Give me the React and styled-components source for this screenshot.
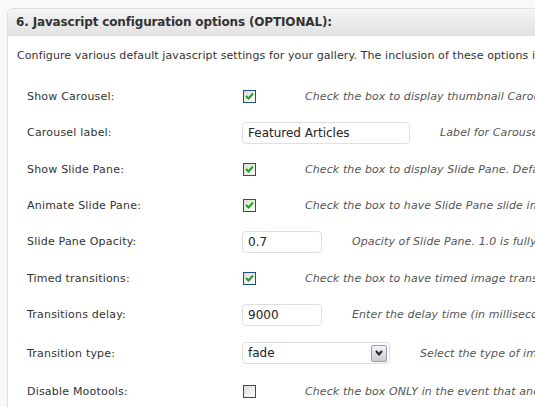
import styled, { createGlobalStyle } from 'styled-components';

const GlobalStyle = createGlobalStyle`
    html, body {
        margin: 0;
        padding: 0;
        background: #f9f9f9;
        overflow: hidden;
    }
    body {
        font-family: "DejaVu Sans", Verdana, sans-serif;
        color: #333;
    }
`;

const Page = styled.div`
    padding: 8px 0 0 7px;
    width: 700px;
    height: 399px;
    overflow: hidden;
`;

const Panel = styled.div`
    background: #fff;
    border: 1px solid #dfdfdf;
    border-top-left-radius: 6px;
    height: 420px;
`;

const Header = styled.h3`
    margin: 0;
    height: 26px;
    line-height: 26px;
    padding-left: 8px;
    font-size: 12px;
    font-weight: bold;
    color: #333;
    letter-spacing: -0.15px;
    background: linear-gradient(#f4f4f4, #e3e3e3);
    border-bottom: 1px solid #dfdfdf;
    border-top-left-radius: 6px;
`;

const Intro = styled.p`
    margin: 13px 0 0 9px;
    font-size: 11px;
    letter-spacing: 0.1px;
    white-space: nowrap;
    color: #333;
`;

const Form = styled.div`
    margin-top: 16px;
    display: flex;
    flex-direction: column;
`;

const Row = styled.div`
    display: grid;
    grid-template-columns: 215px auto;
    align-items: center;
    height: ${(p) => p.$height}px;
    padding-left: 19px;
`;

const Label = styled.div`
    font-size: 11px;
    letter-spacing: 0.2px;
    color: #333;
    white-space: nowrap;
`;

const Field = styled.div`
    display: flex;
    align-items: center;
    gap: 30px;
    white-space: nowrap;
`;

const Hint = styled.span`
    font-size: 11px;
    font-style: italic;
    letter-spacing: 0.1px;
    color: #555;
`;

const Box = styled.span`
    display: inline-flex;
    align-items: center;
    justify-content: center;
    box-sizing: border-box;
    width: 13px;
    height: 13px;
    margin: 0 19px 0 1px;
    border: 1px solid #1c5180;
    background: linear-gradient(135deg, #dcdcd6, #fdfdfb);
`;

const TextInput = styled.div`
    box-sizing: border-box;
    width: ${(p) => p.$width}px;
    height: 22px;
    line-height: 20px;
    padding-left: 5px;
    border: 1px solid #dfdfdf;
    border-radius: 4px;
    background: #fff;
    font-size: 12px;
    color: #222;
`;

const Select = styled(TextInput)`
    display: flex;
    align-items: center;
    justify-content: space-between;
    padding-right: 2px;
`;

const Arrow = styled.span`
    display: flex;
    align-items: center;
    justify-content: center;
    box-sizing: border-box;
    width: 16px;
    height: 17px;
    border: 1px solid #9a9aa8;
    border-radius: 2px;
    background: linear-gradient(#f4f4f6, #c9cad3);
`;

function Checkbox({ checked }) {
    return (
        <Box>
            {checked && (
                <svg width="9" height="8" viewBox="0 0 9 8">
                    <path d="M1 4 L3.5 6.5 L8 1.5" fill="none" stroke="#21a121" strokeWidth="2" />
                </svg>
            )}
        </Box>
    );
}

const rowHeight = { check: 36, text: 37, select: 40 };

const rows = [
    { label: 'Show Carousel:', type: 'check', checked: true, hint: 'Check the box to display thumbnail Carousel. Default is checked.' },
    { label: 'Carousel label:', type: 'text', value: 'Featured Articles', width: 168, hint: 'Label for Carousel. Default is Featured Articles.' },
    { label: 'Show Slide Pane:', type: 'check', checked: true, hint: 'Check the box to display Slide Pane. Default is checked.' },
    { label: 'Animate Slide Pane:', type: 'check', checked: true, hint: 'Check the box to have Slide Pane slide in and out.' },
    { label: 'Slide Pane Opacity:', type: 'text', value: '0.7', width: 80, hint: 'Opacity of Slide Pane. 1.0 is fully opaque.' },
    { label: 'Timed transitions:', type: 'check', checked: true, hint: 'Check the box to have timed image transitions.' },
    { label: 'Transitions delay:', type: 'text', value: '9000', width: 80, hint: 'Enter the delay time (in milliseconds).' },
    { label: 'Transition type:', type: 'select', value: 'fade', width: 148, hint: 'Select the type of image transition.' },
    { label: 'Disable Mootools:', type: 'check', checked: false, hint: 'Check the box ONLY in the event that another plugin uses Mootools.' },
];

function Control({ row }) {
    if (row.type === 'check') return <Checkbox checked={row.checked} />;
    if (row.type === 'select')
        return (
            <Select $width={row.width}>
                <span>{row.value}</span>
                <Arrow>
                    <svg width="8" height="6" viewBox="0 0 8 6">
                        <path d="M1 1 L4 4.5 L7 1" fill="none" stroke="#222" strokeWidth="2" />
                    </svg>
                </Arrow>
            </Select>
        );
    return <TextInput $width={row.width}>{row.value}</TextInput>;
}

export default function App() {
    return (
        <>
            <GlobalStyle />
            <Page>
                <Panel>
                    <Header>6. Javascript configuration options (OPTIONAL):</Header>
                    <Intro>
                        Configure various default javascript settings for your gallery. The inclusion of these options is
                        optional.
                    </Intro>
                    <Form>
                        {rows.map((row) => (
                            <Row key={row.label} $height={rowHeight[row.type]}>
                                <Label>{row.label}</Label>
                                <Field>
                                    <Control row={row} />
                                    <Hint>{row.hint}</Hint>
                                </Field>
                            </Row>
                        ))}
                    </Form>
                </Panel>
            </Page>
        </>
    );
}
